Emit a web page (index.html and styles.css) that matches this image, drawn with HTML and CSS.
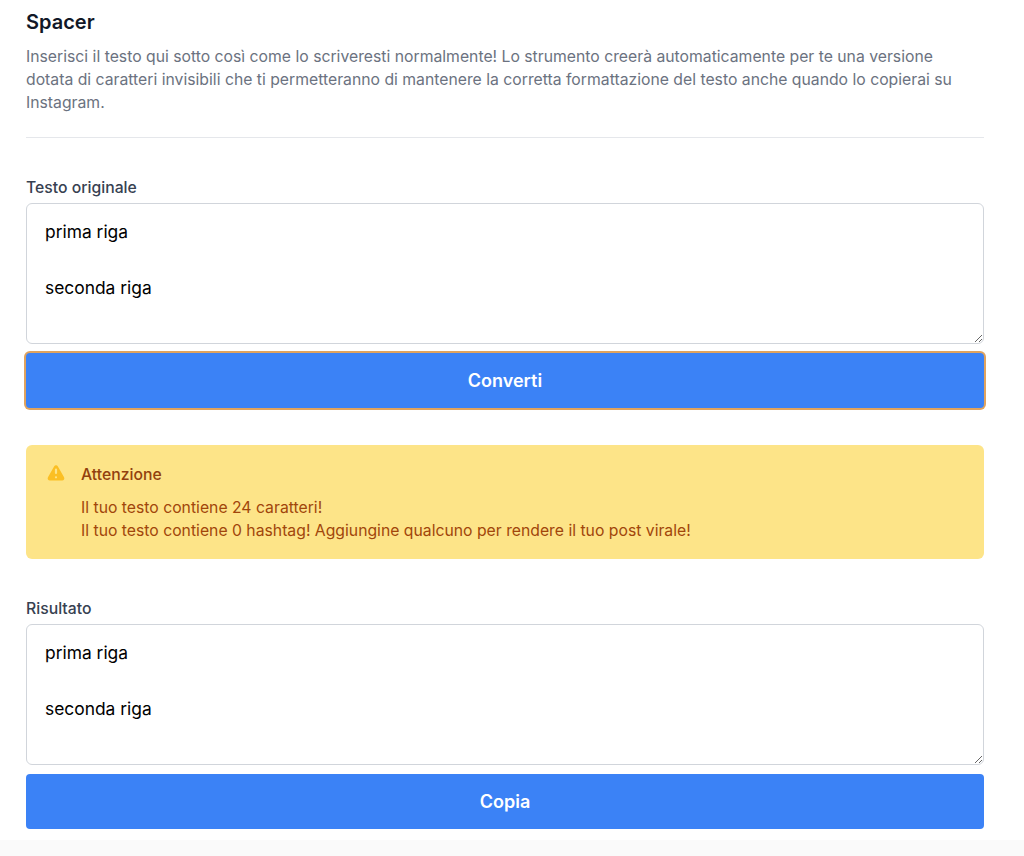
FILE: index.html
```html
<!DOCTYPE html>
<html lang="it">
<head>
    <meta charset="UTF-8">
    <meta name="viewport" content="width=device-width, initial-scale=1.0">
    <title>Spacer</title>
    <link rel="stylesheet" href="styles.css">
</head>
<body>

    <div class="content">
        <!-- Header -->
        <div class="header">
            <h1>Spacer</h1>
            <p>Inserisci il testo qui sotto così come lo scriveresti normalmente! Lo strumento creerà automaticamente per te una versione dotata di caratteri invisibili che ti permetteranno di mantenere la corretta formattazione del testo anche quando lo copierai su Instagram.</p>
        </div>

        <!-- Input -->
        <label class="field-label" for="original">Testo originale</label>
        <textarea class="text-box" id="original">prima riga

seconda riga</textarea>
        <button class="btn btn-focus">Converti</button>

        <!-- Warning -->
        <div class="alert">
            <svg class="alert-icon" viewBox="0 0 20 20" fill="#fbbf24">
                <path fill-rule="evenodd" clip-rule="evenodd" d="M8.257 3.099c.765-1.36 2.722-1.36 3.486 0l5.58 9.92c.75 1.334-.213 2.98-1.742 2.98H4.42c-1.53 0-2.493-1.646-1.743-2.98l5.58-9.92zM11 13a1 1 0 11-2 0 1 1 0 012 0zm-1-8a1 1 0 00-1 1v3a1 1 0 002 0V6a1 1 0 00-1-1z"/>
            </svg>
            <div class="alert-body">
                <h3>Attenzione</h3>
                <p>Il tuo testo contiene 24 caratteri!<br>Il tuo testo contiene 0 hashtag! Aggiungine qualcuno per rendere il tuo post virale!</p>
            </div>
        </div>

        <!-- Result -->
        <label class="field-label" for="result">Risultato</label>
        <textarea class="text-box" id="result">prima riga

seconda riga</textarea>
        <button class="btn">Copia</button>
    </div>

</body>
</html>
```

FILE: styles.css
```css
/* General styles */
html,
body {
    background-color: #fafafa;
}

body {
    font-family: Inter, "Liberation Sans", sans-serif;
    margin: 0;
    padding: 0;
}

.content {
    height: 830px;
    padding: 10px 40px 0 26px;
    background-color: #fff;
}

/* Header */
.header {
    border-bottom: 1px solid #e5e7eb;
    padding-bottom: 23px;
    margin-bottom: 40px;
}

.header h1 {
    margin: 0 0 11px;
    font-size: 20px;
    line-height: 24px;
    font-weight: 600;
    color: #111827;
}

.header p {
    margin: 0;
    font-size: 15.75px;
    line-height: 23px;
    color: #6b7280;
}

/* Form fields */
.field-label {
    display: block;
    font-size: 15.75px;
    line-height: 20px;
    font-weight: 500;
    color: #374151;
    margin-bottom: 5px;
}

.text-box {
    display: block;
    width: 100%;
    height: 141px;
    box-sizing: border-box;
    padding: 14px 18px;
    border: 1px solid #d1d5db;
    border-radius: 6px;
    font-family: inherit;
    font-size: 17.4px;
    line-height: 28px;
    color: #000;
    background-color: #fff;
    outline: none;
}

.btn {
    display: block;
    width: 100%;
    height: 55px;
    margin-top: 9px;
    border: none;
    border-radius: 4px;
    background-color: #3b82f6;
    color: #fff;
    font-family: inherit;
    font-size: 18px;
    font-weight: 600;
    cursor: pointer;
}

.btn-focus {
    box-shadow: 0 0 0 2px #e0a35e;
}

/* Warning box */
.alert {
    display: flex;
    gap: 14px;
    margin: 37px 0 40px;
    padding: 19px 20px 17px;
    background-color: #fde488;
    border-radius: 6px;
}

.alert-icon {
    width: 22px;
    height: 22px;
    margin: -1px 0 0 -1px;
    flex-shrink: 0;
}

.alert-body h3 {
    margin: 0 0 11px;
    font-size: 15.75px;
    line-height: 21px;
    font-weight: 500;
    color: #92400e;
}

.alert-body p {
    margin: 0;
    font-size: 15.75px;
    line-height: 23px;
    color: #a1460b;
}
```
